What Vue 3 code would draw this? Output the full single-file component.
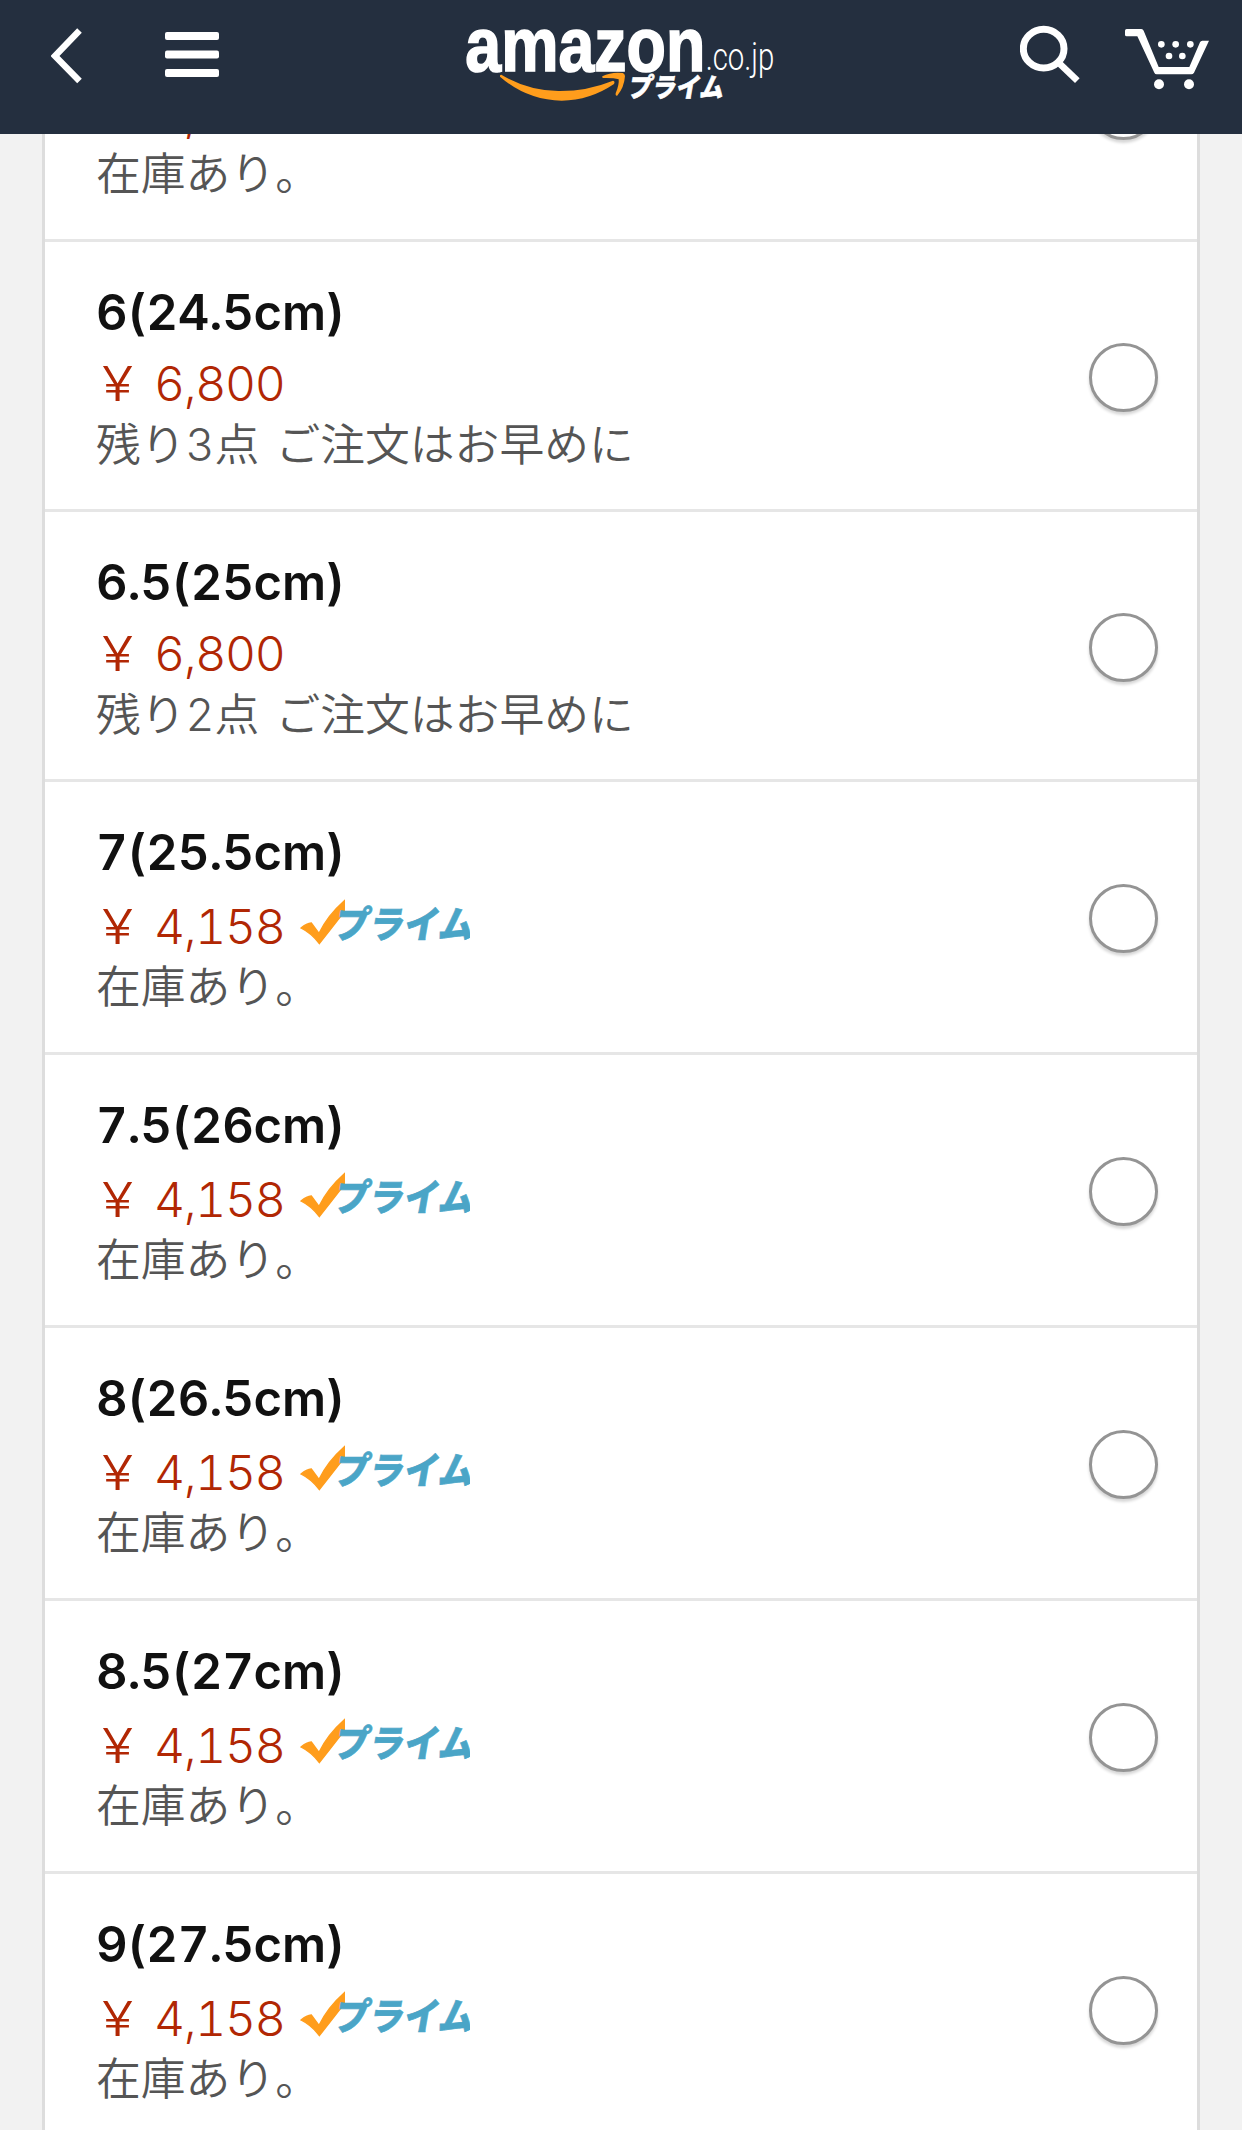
<script setup>
import { ref } from 'vue'

const sizes = [
  { id: 1, label: '5.5(24cm)', price: '4,158', stock: '在庫あり。', prime: true },
  { id: 2, label: '6(24.5cm)', price: '6,800', stock: '残り3点 ご注文はお早めに', prime: false },
  { id: 3, label: '6.5(25cm)', price: '6,800', stock: '残り2点 ご注文はお早めに', prime: false },
  { id: 4, label: '7(25.5cm)', price: '4,158', stock: '在庫あり。', prime: true },
  { id: 5, label: '7.5(26cm)', price: '4,158', stock: '在庫あり。', prime: true },
  { id: 6, label: '8(26.5cm)', price: '4,158', stock: '在庫あり。', prime: true },
  { id: 7, label: '8.5(27cm)', price: '4,158', stock: '在庫あり。', prime: true },
  { id: 8, label: '9(27.5cm)', price: '4,158', stock: '在庫あり。', prime: true }
]

const selected = ref(null)
</script>

<template>
  <div class="screen">
    <header class="topbar">
      <div class="group">
        <svg class="back" viewBox="0 0 31 134"><path d="M28.500 30.500L4 56L28.500 81" fill="none" stroke="#fff" stroke-width="6.400" /></svg>
        <svg class="menu" viewBox="0 0 54 134" fill="#fff">
          <rect y="32" width="54" height="8" rx="2" />
          <rect y="50.500" width="54" height="8" rx="2" />
          <rect y="69" width="54" height="8" rx="2" />
        </svg>
      </div>
      <svg class="logo" viewBox="60 0 960 402">
        <text class="logo-name" x="76" y="212" textLength="720" lengthAdjust="spacingAndGlyphs">amazon</text>
        <text class="logo-tld" x="797" y="209" textLength="206" lengthAdjust="spacingAndGlyphs">.co.jp</text>
        <path d="M184 224Q262 271 355 273Q440 274 519 242Q526 243 522 252Q450 301 365 302Q260 300 180 230Q179 224 184 224Z" fill="#ff9d1c" />
        <path d="M487 229Q514 215 548 219Q554 221 555 228Q553 262 531 288Q525 287 527 280Q538 254 536 238Q520 233 489 234Q485 233 487 229Z" fill="#ff9d1c" />
        <text class="logo-prime" transform="translate(562 292) skewX(-10)" textLength="286" lengthAdjust="spacingAndGlyphs">プライム</text>
      </svg>
      <div class="group">
        <svg class="search" viewBox="120 0 180 402">
          <ellipse cx="191" cy="146" rx="61" ry="58" fill="none" stroke="#fff" stroke-width="21" />
          <path d="M238 190L292 242" stroke="#fff" stroke-width="20" />
        </svg>
        <svg class="cart" viewBox="435 0 252 402" fill="#fff">
          <path d="M435 92Q435 87 440 87H484Q489 87 491 92L536 201H628L660 127Q662 122 667 122H687L642 218Q639 223 634 223H530Q525 223 523 218L472 109H440Q435 109 435 104Z" />
          <circle cx="544" cy="133" r="10" />
          <circle cx="587" cy="133" r="10" />
          <circle cx="631" cy="133" r="10" />
          <circle cx="567" cy="168" r="10" />
          <circle cx="607" cy="168" r="10" />
          <circle cx="537" cy="253" r="15" />
          <circle cx="627" cy="253" r="15" />
        </svg>
      </div>
    </header>

    <main class="list">
      <label v-for="item in sizes" :key="item.id" class="row" :class="{ 'has-prime': item.prime }">
        <div class="info">
          <div class="size">{{ item.label }}</div>
          <div class="price-line">
            <span class="yen">¥</span>
            <span class="price">{{ item.price }}</span>
            <svg v-if="item.prime" class="prime" viewBox="0 0 540 180">
              <path d="M33 114Q50 100 64 99L87 130Q112 77 163 32V65Q133 104 88 161Q65 130 33 114Z" fill="#ff9d1c" stroke="#ff9d1c" stroke-width="4" />
              <text transform="translate(128 144) skewX(-10)" textLength="418" lengthAdjust="spacingAndGlyphs">プライム</text>
            </svg>
          </div>
          <div class="stock">{{ item.stock }}</div>
        </div>
        <input v-model="selected" class="radio" type="radio" name="size" :value="item.id">
      </label>
    </main>
  </div>
</template>

<style>
body{margin:0;background:#f2f2f2;}
</style>

<style scoped>
.screen{height:2130px;overflow:hidden;background:#f2f2f2;font-family:Inter,'Noto Sans CJK JP',sans-serif;}
.topbar{position:relative;z-index:1;display:flex;justify-content:space-between;height:134px;padding:0 33px 0 51px;box-sizing:border-box;background:#242f3f;}
.topbar svg{display:block;height:134px;}
.group{display:flex;}
.back{width:31px;margin-right:83px;}
.menu{width:54px;}
.logo{width:320px;margin-left:1px;}
.logo-name{font:700 226px 'Liberation Sans',sans-serif;fill:#fff;stroke:#fff;stroke-width:5px;}
.logo-tld{font:300 116px Roboto,sans-serif;fill:#fff;}
.logo-prime{font:900 80px 'Noto Sans CJK JP',sans-serif;fill:#fff;stroke:#fff;stroke-width:2px;}
.search{width:60px;margin-right:45px;}
.cart{width:84px;}

/* first row is scrolled partly under the top bar */
.list{margin:-165px 42px 0;border:solid #ddd;border-width:0 3px;background:#fff;}
.row{display:flex;align-items:center;justify-content:space-between;height:270px;box-sizing:border-box;padding:3px 39px 0 51px;border-bottom:3px solid #e6e6e6;}
.row.has-prime{height:273px;}
.info{align-self:flex-start;padding-top:36px;font-variant-numeric:tabular-nums;font-kerning:none;}
.size{height:65px;line-height:64px;font-size:49px;font-weight:600;letter-spacing:-.25px;color:#111;white-space:nowrap;}
.price-line{display:flex;height:76px;line-height:76px;font-size:48px;font-weight:300;color:#b12704;}
.has-prime .price-line{height:78px;line-height:82px;}
.yen{width:58px;padding-left:5px;box-sizing:border-box;transform:scaleX(1.2);transform-origin:0 0;}
.price{width:136px;letter-spacing:-1.3px;white-space:nowrap;}
.stock{height:60px;margin-top:-7px;line-height:60px;font-size:44.800px;font-weight:350;word-spacing:4px;color:#555;white-space:nowrap;}
.prime{width:180px;height:60px;margin-top:4px;}
.prime text{font:900 112px 'Noto Sans CJK JP',sans-serif;fill:#4aa5c7;stroke:#4aa5c7;stroke-width:2px;}
.radio{appearance:none;flex:none;width:69px;height:69px;margin:0;border:3px solid #949494;border-radius:50%;background:#fff;box-shadow:0 3px 3px rgba(0,0,0,.16);}
.radio:checked{border:20px solid #e77600;}
</style>
